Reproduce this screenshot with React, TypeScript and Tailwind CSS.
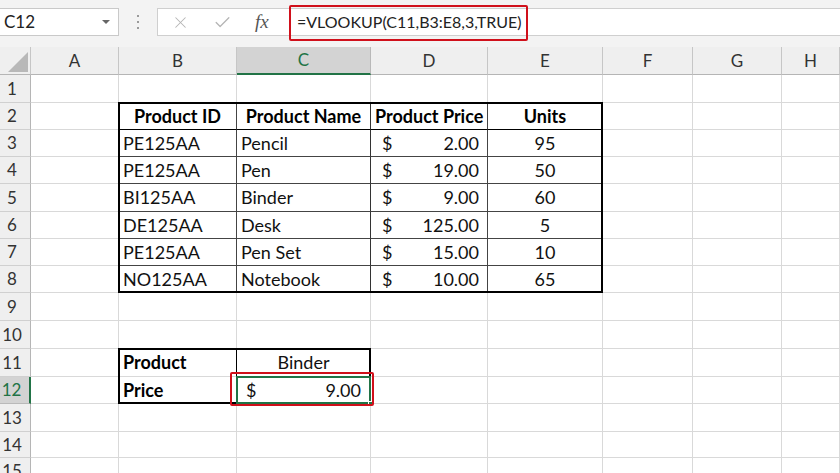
import { X, Check } from "lucide-react";

const colLetters = ["A", "B", "C", "D", "E", "F", "G", "H"];
const colStart = ["col-start-1", "col-start-2", "col-start-3", "col-start-4", "col-start-5", "col-start-6", "col-start-7", "col-start-8", "col-start-9"];
const rowStart = ["row-start-1", "row-start-2", "row-start-3", "row-start-4", "row-start-5", "row-start-6", "row-start-7", "row-start-8", "row-start-9", "row-start-10", "row-start-11", "row-start-12", "row-start-13", "row-start-14", "row-start-15", "row-start-16"];

type CellData = { text?: string; bold?: boolean; align?: "left" | "center"; money?: string; mPad?: string };

const cells: Record<string, CellData> = {
  B2: { text: "Product ID", bold: true, align: "center" },
  C2: { text: "Product Name", bold: true, align: "center" },
  D2: { text: "Product Price", bold: true, align: "center" },
  E2: { text: "Units", bold: true, align: "center" },
  B11: { text: "Product", bold: true },
  B12: { text: "Price", bold: true },
  C11: { text: "Binder", align: "center" },
  C12: { money: "9.00", mPad: "pl-[9px] pr-[9px]" },
};

const rows = [
  ["PE125AA", "Pencil", "2.00", "95"],
  ["PE125AA", "Pen", "19.00", "50"],
  ["BI125AA", "Binder", "9.00", "60"],
  ["DE125AA", "Desk", "125.00", "5"],
  ["PE125AA", "Pen Set", "15.00", "10"],
  ["NO125AA", "Notebook", "10.00", "65"],
];
rows.forEach((r, i) => {
  const n = i + 3;
  cells["B" + n] = { text: r[0] };
  cells["C" + n] = { text: r[1] };
  cells["D" + n] = { money: r[2], mPad: "pl-[11px] pr-[8px]" };
  cells["E" + n] = { text: r[3], align: "center" };
});

function cellBorder(col: string, row: number) {
  const inMain = row >= 2 && row <= 8 && "BCDE".includes(col);
  const inSmall = row >= 11 && row <= 12 && "BC".includes(col);
  if (inMain) {
    const right = col === "E" ? "border-r-[#d9d9d9] border-solid" : col === "C" ? "border-r-[#333]" : "border-r-[#444] border-r-dotted";
    const bottom = row === 2 ? "border-b-black border-b-solid" : "border-b-[#444] border-b-dotted";
    return `${right} ${bottom}`;
  }
  if (inSmall) {
    const right = col === "B" ? "border-r-black" : "border-r-[#d9d9d9]";
    return `${right} border-b-[#d9d9d9]`;
  }
  return "border-[#d9d9d9]";
}

function Cell({ col, row }: { col: number; row: number }) {
  const letter = colLetters[col];
  const key = letter + row;
  const d = cells[key];
  const selected = key === "C12";
  return (
    <div
      className={`${colStart[col + 1]} ${rowStart[row]} flex items-center border-r border-b bg-white text-[18px] text-[#111] ${cellBorder(letter, row)} ${selected ? "relative z-20" : ""}`}
    >
      {d?.text && (
        <span className={`w-full whitespace-nowrap px-[4px] ${d.bold ? "font-bold text-black" : ""} ${d.align === "center" ? "text-center" : "text-left"}`}>
          {d.text}
        </span>
      )}
      {d?.money && (
        <div className={`flex w-full justify-between ${d.mPad}`}>
          <span>$</span>
          <span>{d.money}</span>
        </div>
      )}
      {selected && (
        <>
          <div className="pointer-events-none absolute -left-px -top-px -right-px -bottom-px border-2 border-[#217346]" />
          <div className="absolute -right-[3px] -bottom-[3px] h-[5px] w-[5px] border border-white bg-[#217346]" />
          <div className="pointer-events-none absolute -left-[7px] -top-[5px] -right-[4px] -bottom-[3px] rounded-[2px] border-2 border-[#d0101b]" />
        </>
      )}
    </div>
  );
}

export default function App() {
  const sheetRows = Array.from({ length: 15 }, (_, i) => i + 1);
  return (
    <div className="h-[473px] w-[840px] overflow-hidden bg-white" style={{ fontFamily: "Lato, 'Noto Sans', sans-serif" }}>
      {/* formula bar */}
      <div className="flex h-[47px] items-start bg-[#f3f3f3] pt-[8px]">
        <div className="flex h-[28px] w-[119px] items-center justify-between border border-l-0 border-[#c9c9c9] bg-white pl-[4px] pr-[8px]">
          <span className="text-[17px] text-[#222]">C12</span>
          <svg width="8" height="5" viewBox="0 0 8 5">
            <path d="M0 0 L8 0 L4 4 Z" fill="#666" />
          </svg>
        </div>
        <div className="flex h-[28px] w-[38px] flex-col items-center justify-center gap-[4px]">
          <span className="h-[2px] w-[2px] bg-[#9a9a9a]" />
          <span className="h-[2px] w-[2px] bg-[#9a9a9a]" />
          <span className="h-[2px] w-[2px] bg-[#9a9a9a]" />
        </div>
        <div className="flex h-[28px] flex-1 items-center border border-r-0 border-[#cfcfcf] bg-white">
          <div className="flex w-[132px] items-center pl-[13px]">
            <X size={19} strokeWidth={1.3} color="#b4b4b4" />
            <Check size={19} strokeWidth={1.6} color="#b4b4b4" className="ml-[23px]" />
            <span className="ml-[23px] text-[19px] italic text-[#555]" style={{ fontFamily: "'Liberation Serif', serif" }}>
              fx
            </span>
          </div>
          <div className="relative flex h-full flex-1 items-center pl-[7px] text-[16px] text-[#222]">
            =VLOOKUP(C11,B3:E8,3,TRUE)
            <div className="pointer-events-none absolute -left-[1px] -top-[4px] h-[36px] w-[239px] rounded-[2px] border-2 border-[#d0101b]" />
          </div>
        </div>
      </div>

      {/* sheet */}
      <div className="grid grid-cols-[31px_88px_118px_134px_117px_115px_90px_89px_58px] grid-rows-[28px_28px_27px_27px_27px_28px_27px_27px_27px_28px_28px_28px_27px_28px_26px_27px]">
        {/* corner */}
        <div className="col-start-1 row-start-1 relative border-r border-b border-r-[#c6c6c6] border-b-[#b5b5b5] bg-[#efefef]">
          <svg className="absolute left-[8px] top-[5px]" width="20" height="20" viewBox="0 0 20 20">
            <path d="M20 0 L20 20 L0 20 Z" fill="#b8b8b8" />
          </svg>
        </div>
        {colLetters.map((l, i) => (
          <div
            key={l}
            className={`${colStart[i + 1]} row-start-1 flex items-center justify-center border-r text-[17px] ${
              l === "C"
                ? "border-b-2 border-b-[#217346] border-r-[#b9b9b9] bg-[#d3d3d3] text-[#217346]"
                : "border-b border-b-[#b5b5b5] border-r-[#c6c6c6] bg-[#efefef] text-[#333]"
            }`}
          >
            {l}
          </div>
        ))}
        {sheetRows.map((r) => (
          <div
            key={"h" + r}
            className={`col-start-1 ${rowStart[r]} flex items-center justify-center pr-[6px] text-[17px] ${
              r === 12
                ? "border-r-2 border-b border-r-[#217346] border-b-[#b9b9b9] bg-[#d3d3d3] text-[#217346]"
                : "border-r border-b border-r-[#b5b5b5] border-b-[#d0d0d0] bg-[#efefef] text-[#333]"
            }`}
          >
            {r}
          </div>
        ))}
        {sheetRows.map((r) => colLetters.map((_, c) => <Cell key={r + "-" + c} col={c} row={r} />))}

        {/* table frames */}
        <div className="pointer-events-none relative z-10 col-start-3 col-end-7 row-start-3 row-end-10 -ml-[1px] -mt-[1px] border-2 border-black" />
        <div className="pointer-events-none relative z-10 col-start-3 col-end-5 row-start-12 row-end-14 -ml-[1px] -mt-[1px] border-2 border-black" />
      </div>
    </div>
  );
}
